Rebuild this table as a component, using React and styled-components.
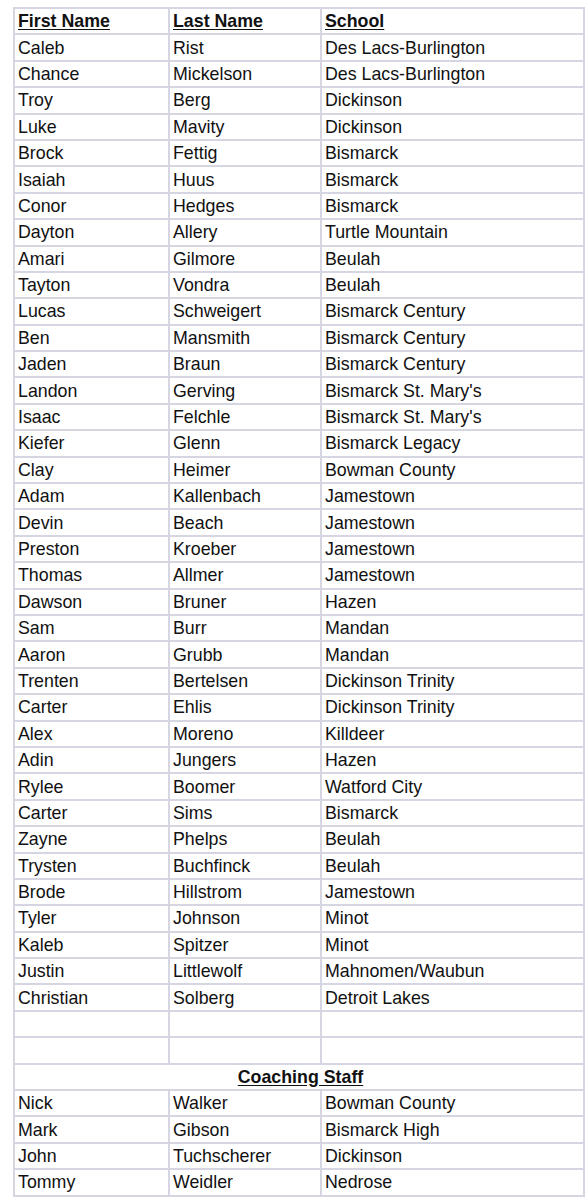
import React from 'react';
import styled, { createGlobalStyle } from 'styled-components';

const GlobalStyle = createGlobalStyle`
  body {
    margin: 0;
    background: #ffffff;
    font-family: "Liberation Sans", Arial, sans-serif;
  }
`;

const Page = styled.div`
  padding: 7px 0 0 13px;
`;

const Roster = styled.table`
  border-collapse: collapse;
  width: 570px;
  table-layout: fixed;
  color: #111;
  font-size: 17.8px;
`;

const Cell = styled.td`
  border: 2px solid #d6d6e2;
  height: 24.4px;
  padding: 0 0 0 3px;
  line-height: 24px;
  white-space: nowrap;
  overflow: hidden;
  text-align: ${p => (p.$center ? 'center' : 'left')};
  font-weight: ${p => (p.$bold ? 700 : 400)};
`;

const Heading = styled.span`
  text-decoration: underline;
  text-underline-offset: 2px;
`;

const players = [
  ['Caleb', 'Rist', 'Des Lacs-Burlington'],
  ['Chance', 'Mickelson', 'Des Lacs-Burlington'],
  ['Troy', 'Berg', 'Dickinson'],
  ['Luke', 'Mavity', 'Dickinson'],
  ['Brock', 'Fettig', 'Bismarck'],
  ['Isaiah', 'Huus', 'Bismarck'],
  ['Conor', 'Hedges', 'Bismarck'],
  ['Dayton', 'Allery', 'Turtle Mountain'],
  ['Amari', 'Gilmore', 'Beulah'],
  ['Tayton', 'Vondra', 'Beulah'],
  ['Lucas', 'Schweigert', 'Bismarck Century'],
  ['Ben', 'Mansmith', 'Bismarck Century'],
  ['Jaden', 'Braun', 'Bismarck Century'],
  ['Landon', 'Gerving', "Bismarck St. Mary's"],
  ['Isaac', 'Felchle', "Bismarck St. Mary's"],
  ['Kiefer', 'Glenn', 'Bismarck Legacy'],
  ['Clay', 'Heimer', 'Bowman County'],
  ['Adam', 'Kallenbach', 'Jamestown'],
  ['Devin', 'Beach', 'Jamestown'],
  ['Preston', 'Kroeber', 'Jamestown'],
  ['Thomas', 'Allmer', 'Jamestown'],
  ['Dawson', 'Bruner', 'Hazen'],
  ['Sam', 'Burr', 'Mandan'],
  ['Aaron', 'Grubb', 'Mandan'],
  ['Trenten', 'Bertelsen', 'Dickinson Trinity'],
  ['Carter', 'Ehlis', 'Dickinson Trinity'],
  ['Alex', 'Moreno', 'Killdeer'],
  ['Adin', 'Jungers', 'Hazen'],
  ['Rylee', 'Boomer', 'Watford City'],
  ['Carter', 'Sims', 'Bismarck'],
  ['Zayne', 'Phelps', 'Beulah'],
  ['Trysten', 'Buchfinck', 'Beulah'],
  ['Brode', 'Hillstrom', 'Jamestown'],
  ['Tyler', 'Johnson', 'Minot'],
  ['Kaleb', 'Spitzer', 'Minot'],
  ['Justin', 'Littlewolf', 'Mahnomen/Waubun'],
  ['Christian', 'Solberg', 'Detroit Lakes'],
];

const coaches = [
  ['Nick', 'Walker', 'Bowman County'],
  ['Mark', 'Gibson', 'Bismarck High'],
  ['John', 'Tuchscherer', 'Dickinson'],
  ['Tommy', 'Weidler', 'Nedrose'],
];

function Row({ data }) {
  return (
    <tr>
      {data.map((v, i) => (
        <Cell key={i}>{v}</Cell>
      ))}
    </tr>
  );
}

export default function App() {
  return (
    <Page>
      <GlobalStyle />
      <Roster>
        <colgroup>
          <col style={{ width: 155 }} />
          <col style={{ width: 152 }} />
          <col style={{ width: 263 }} />
        </colgroup>
        <tbody>
          <tr>
            <Cell $bold><Heading>First Name</Heading></Cell>
            <Cell $bold><Heading>Last Name</Heading></Cell>
            <Cell $bold><Heading>School</Heading></Cell>
          </tr>
          {players.map((p, i) => <Row key={i} data={p} />)}
          <Row data={['', '', '']} />
          <Row data={['', '', '']} />
          <tr>
            <Cell $bold $center colSpan={3}><Heading>Coaching Staff</Heading></Cell>
          </tr>
          {coaches.map((c, i) => <Row key={i} data={c} />)}
        </tbody>
      </Roster>
    </Page>
  );
}
